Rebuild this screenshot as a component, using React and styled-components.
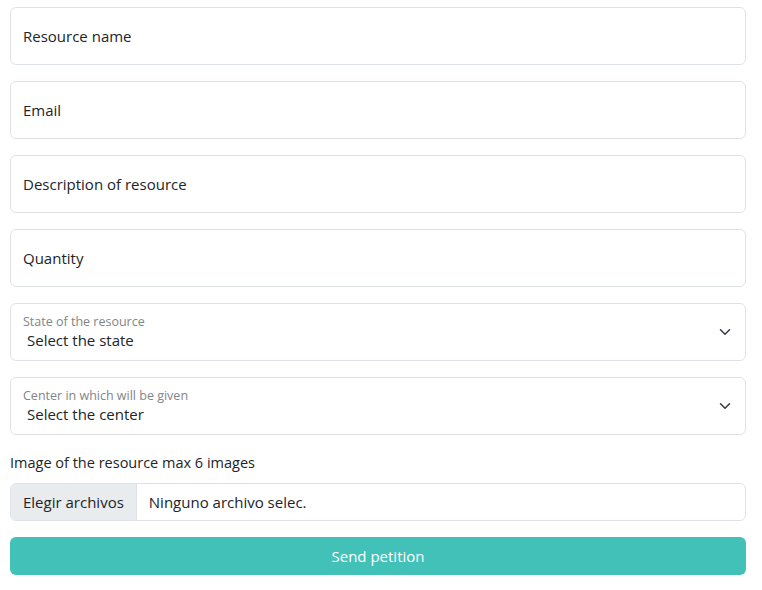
import React from "react";
import styled, { createGlobalStyle } from "styled-components";

const Global = createGlobalStyle`
  * { box-sizing: border-box; }
  body {
    margin: 0;
    background: #fff;
    font-family: "Open Sans", "Noto Sans", sans-serif;
    color: #212529;
  }
`;

const Form = styled.form`
  display: flex;
  flex-direction: column;
  padding: 7px 16px 0 10px;
`;

const Field = styled.div`
  position: relative;
  height: 58px;
  margin-bottom: 16px;
  border: 1px solid #dee2e6;
  border-radius: 6px;
  background: #fff;
`;

const TextInput = styled.input`
  width: 100%;
  height: 100%;
  border: none;
  outline: none;
  background: transparent;
  padding: 0 12px;
  font-family: inherit;
  font-size: 15px;
  color: #212529;
  &::placeholder { color: #212529; opacity: 1; }
`;

const SelectBox = styled.div`
  display: flex;
  flex-direction: column;
  justify-content: flex-start;
  height: 100%;
  padding: 9px 12px 0 12px;
  position: relative;
`;

const SmallLabel = styled.span`
  font-size: 12.5px;
  color: #808589;
  line-height: 17px;
`;

const SelectValue = styled.span`
  font-size: 15px;
  line-height: 20px;
  padding-left: 4px;
  color: #212529;
`;

const Chevron = styled.svg`
  position: absolute;
  right: 14px;
  top: 22px;
`;

const FileLabel = styled.div`
  font-size: 14.5px;
  margin: 0 0 8px 0;
  line-height: 24px;
  color: #212529;
`;

const FileRow = styled.div`
  display: flex;
  height: 38px;
  border: 1px solid #dee2e6;
  border-radius: 6px;
  overflow: hidden;
  margin-bottom: 16px;
`;

const FileButton = styled.div`
  display: flex;
  align-items: center;
  padding: 0 12px;
  background: #e9ecef;
  border-right: 1px solid #dee2e6;
  font-size: 15px;
  color: #212529;
`;

const FileName = styled.div`
  display: flex;
  align-items: center;
  padding: 0 12px;
  font-size: 15px;
  color: #212529;
`;

const Submit = styled.button`
  height: 38px;
  border: none;
  border-radius: 6px;
  background: #42c1b9;
  color: #fff;
  font-family: inherit;
  font-size: 15px;
`;

const ChevronIcon = () => (
  <Chevron width="12" height="12" viewBox="0 0 16 16">
    <path d="M2 5l6 6 6-6" fill="none" stroke="#343a40" strokeWidth="2" strokeLinecap="round" strokeLinejoin="round" />
  </Chevron>
);

const SelectField = ({ label, value }) => (
  <Field>
    <SelectBox>
      <SmallLabel>{label}</SmallLabel>
      <SelectValue>{value}</SelectValue>
      <ChevronIcon />
    </SelectBox>
  </Field>
);

export default function App() {
  return (
    <>
      <Global />
      <Form onSubmit={(e) => e.preventDefault()}>
        <Field><TextInput placeholder="Resource name" /></Field>
        <Field><TextInput placeholder="Email" /></Field>
        <Field><TextInput placeholder="Description of resource" /></Field>
        <Field><TextInput placeholder="Quantity" /></Field>
        <SelectField label="State of the resource" value="Select the state" />
        <SelectField label="Center in which will be given" value="Select the center" />
        <FileLabel>Image of the resource max 6 images</FileLabel>
        <FileRow>
          <FileButton>Elegir archivos</FileButton>
          <FileName>Ninguno archivo selec.</FileName>
        </FileRow>
        <Submit type="submit">Send petition</Submit>
      </Form>
    </>
  );
}
